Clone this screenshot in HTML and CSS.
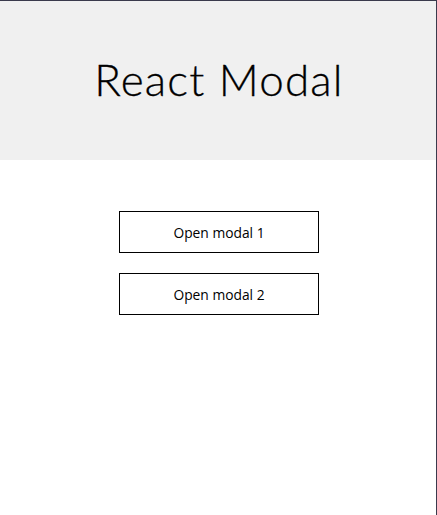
FILE: index.html
```html
<!DOCTYPE html>
<html lang="en">
<head>
<meta charset="utf-8">
<title>React Modal</title>
<link rel="stylesheet" href="styles.css">
</head>
<body>
<div class="app">
  <header class="header">
    <h1 class="title">React Modal</h1>
  </header>
  <main class="main">
    <button class="btn" type="button">Open modal 1</button>
    <button class="btn" type="button">Open modal 2</button>
  </main>
</div>
</body>
</html>
```
FILE: styles.css
```css
html, body {
  margin: 0;
  padding: 0;
  background: #ffffff;
}
.app {
  box-sizing: border-box;
  min-height: 100vh;
  border-top: 1px solid #3a3a4c;
  border-right: 1px solid #3a3a4c;
  font-family: "Open Sans", "Noto Sans", sans-serif;
  color: #000;
}
.header {
  height: 159px;
  padding-left: 2px;
  background: #f0f0f0;
  display: flex;
  align-items: center;
  justify-content: center;
}
.title {
  margin: 0 0 3px;
  font-family: "Lato", "Open Sans", sans-serif;
  font-weight: 300;
  font-size: 44px;
  letter-spacing: 1.2px;
  line-height: 1;
  -webkit-text-stroke: 0.3px #000;
}
.main {
  display: flex;
  flex-direction: column;
  align-items: center;
  gap: 20px;
  padding-top: 51px;
  padding-left: 2px;
}
.btn {
  box-sizing: border-box;
  width: 200px;
  height: 42px;
  background: #fff;
  border: 1px solid #000;
  border-radius: 0;
  font-family: "Open Sans", "Noto Sans", sans-serif;
  font-size: 13.8px;
  color: #000;
  cursor: pointer;
}
```
